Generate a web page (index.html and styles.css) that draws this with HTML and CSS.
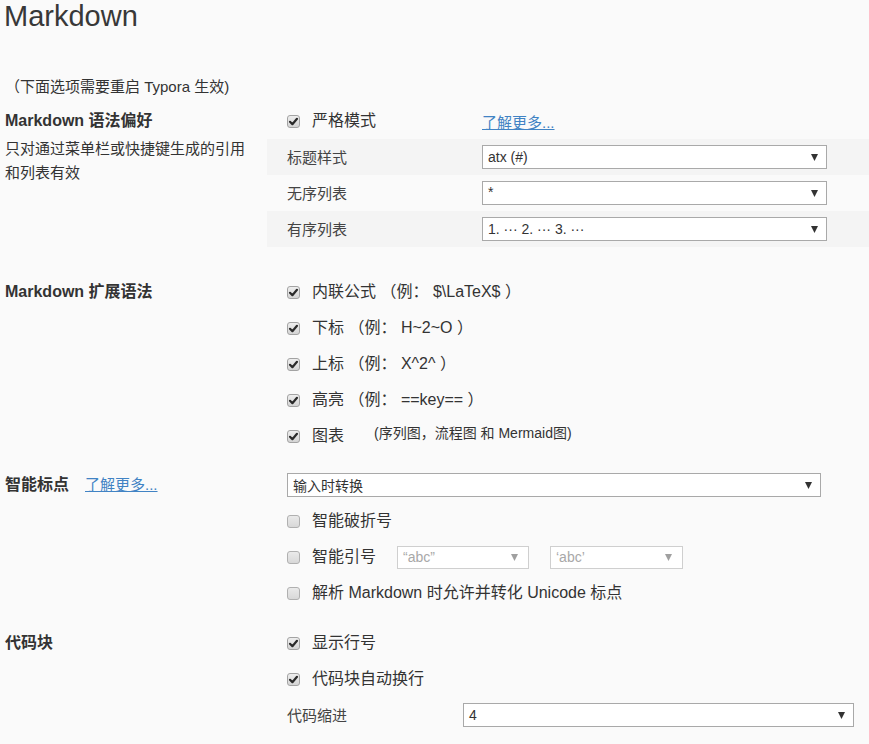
FILE: index.html
```html
<!DOCTYPE html>
<html lang="zh-CN">
<head>
<meta charset="utf-8">
<title>Markdown</title>
<link rel="stylesheet" href="styles.css">
</head>
<body>
<h1 class="title">Markdown</h1>
<p class="note">（下面选项需要重启 Typora 生效)</p>

<section class="group g1">
  <div class="side">
    <h2 class="head">Markdown 语法偏好</h2>
    <p class="desc">只对通过菜单栏或快捷键生成的引用<br>和列表有效</p>
  </div>
  <div class="main">
    <div class="row">
      <label class="check w195"><span class="box"><svg viewBox="0 0 13 13" width="13" height="13"><path d="M3 6.8 L5.4 9.2 L10 3.8" fill="none" stroke="#2b2b2b" stroke-width="2.2" stroke-linecap="round" stroke-linejoin="round"/></svg></span><span class="txt">严格模式</span></label>
      <a class="link" href="#">了解更多...</a>
    </div>
    <div class="row stripe">
      <span class="lbl w195">标题样式</span>
      <div class="select s345"><span>atx (#)</span><svg class="arr" viewBox="0 0 7 7" width="7" height="7"><path d="M0 0 H7 L3.5 7 Z" fill="#333"/></svg></div>
    </div>
    <div class="row">
      <span class="lbl w195">无序列表</span>
      <div class="select s345"><span class="star">*</span><svg class="arr" viewBox="0 0 7 7" width="7" height="7"><path d="M0 0 H7 L3.5 7 Z" fill="#333"/></svg></div>
    </div>
    <div class="row stripe">
      <span class="lbl w195">有序列表</span>
      <div class="select s345"><span>1. ··· 2. ··· 3. ···</span><svg class="arr" viewBox="0 0 7 7" width="7" height="7"><path d="M0 0 H7 L3.5 7 Z" fill="#333"/></svg></div>
    </div>
  </div>
</section>

<section class="group g2">
  <div class="side">
    <h2 class="head">Markdown 扩展语法</h2>
  </div>
  <div class="main">
    <div class="row"><label class="check"><span class="box"><svg viewBox="0 0 13 13" width="13" height="13"><path d="M3 6.8 L5.4 9.2 L10 3.8" fill="none" stroke="#2b2b2b" stroke-width="2.2" stroke-linecap="round" stroke-linejoin="round"/></svg></span><span class="txt">内联公式 （例： $\LaTeX$ ）</span></label></div>
    <div class="row"><label class="check"><span class="box"><svg viewBox="0 0 13 13" width="13" height="13"><path d="M3 6.8 L5.4 9.2 L10 3.8" fill="none" stroke="#2b2b2b" stroke-width="2.2" stroke-linecap="round" stroke-linejoin="round"/></svg></span><span class="txt">下标 （例： H~2~O ）</span></label></div>
    <div class="row"><label class="check"><span class="box"><svg viewBox="0 0 13 13" width="13" height="13"><path d="M3 6.8 L5.4 9.2 L10 3.8" fill="none" stroke="#2b2b2b" stroke-width="2.2" stroke-linecap="round" stroke-linejoin="round"/></svg></span><span class="txt">上标 （例： X^2^ ）</span></label></div>
    <div class="row"><label class="check"><span class="box"><svg viewBox="0 0 13 13" width="13" height="13"><path d="M3 6.8 L5.4 9.2 L10 3.8" fill="none" stroke="#2b2b2b" stroke-width="2.2" stroke-linecap="round" stroke-linejoin="round"/></svg></span><span class="txt">高亮 （例： ==key== ）</span></label></div>
    <div class="row"><label class="check"><span class="box"><svg viewBox="0 0 13 13" width="13" height="13"><path d="M3 6.8 L5.4 9.2 L10 3.8" fill="none" stroke="#2b2b2b" stroke-width="2.2" stroke-linecap="round" stroke-linejoin="round"/></svg></span><span class="txt">图表</span><span class="aside">(序列图，流程图 和 Mermaid图)</span></label></div>
  </div>
</section>

<section class="group g3">
  <div class="side">
    <h2 class="head">智能标点<a class="link hlink" href="#">了解更多...</a></h2>
  </div>
  <div class="main">
    <div class="row">
      <div class="select s534"><span class="cjk">输入时转换</span><svg class="arr" viewBox="0 0 7 7" width="7" height="7"><path d="M0 0 H7 L3.5 7 Z" fill="#333"/></svg></div>
    </div>
    <div class="row"><label class="check"><span class="box off"></span><span class="txt">智能破折号</span></label></div>
    <div class="row">
      <label class="check w110"><span class="box off"></span><span class="txt">智能引号</span></label>
      <div class="select small dis"><span>“abc”</span><svg class="arr" viewBox="0 0 7 7" width="7" height="7"><path d="M0 0 H7 L3.5 7 Z" fill="#a0a0a0"/></svg></div>
      <div class="select small dis gap"><span>‘abc’</span><svg class="arr" viewBox="0 0 7 7" width="7" height="7"><path d="M0 0 H7 L3.5 7 Z" fill="#a0a0a0"/></svg></div>
    </div>
    <div class="row"><label class="check"><span class="box off"></span><span class="txt">解析 Markdown 时允许并转化 Unicode 标点</span></label></div>
  </div>
</section>

<section class="group g4">
  <div class="side">
    <h2 class="head">代码块</h2>
  </div>
  <div class="main">
    <div class="row"><label class="check"><span class="box"><svg viewBox="0 0 13 13" width="13" height="13"><path d="M3 6.8 L5.4 9.2 L10 3.8" fill="none" stroke="#2b2b2b" stroke-width="2.2" stroke-linecap="round" stroke-linejoin="round"/></svg></span><span class="txt">显示行号</span></label></div>
    <div class="row"><label class="check"><span class="box"><svg viewBox="0 0 13 13" width="13" height="13"><path d="M3 6.8 L5.4 9.2 L10 3.8" fill="none" stroke="#2b2b2b" stroke-width="2.2" stroke-linecap="round" stroke-linejoin="round"/></svg></span><span class="txt">代码块自动换行</span></label></div>
    <div class="row">
      <span class="lbl w176">代码缩进</span>
      <div class="select s391"><span>4</span><svg class="arr" viewBox="0 0 7 7" width="7" height="7"><path d="M0 0 H7 L3.5 7 Z" fill="#333"/></svg></div>
    </div>
  </div>
</section>
</body>
</html>
```

FILE: styles.css
```css
* { box-sizing: border-box; }

html, body {
  margin: 0;
  padding: 0;
  background: #fafafa;
}

body {
  width: 869px;
  height: 744px;
  overflow: hidden;
  color: #333;
  font-family: "Liberation Sans", "Noto Sans CJK SC", sans-serif;
  font-size: 16px;
}

.title {
  margin: 0;
  padding-left: 4px;
  font-size: 29px;
  font-weight: normal;
  line-height: 32px;
  color: #383838;
}

.note {
  margin: 43px 0 0 0;
  padding-left: 5px;
  font-size: 15px;
  line-height: 24px;
  height: 24px;
  color: #333;
}

.group {
  display: flex;
  align-items: flex-start;
}

.g1 { margin-top: 4px; }
.g2 { margin-top: 27px; }
.g3 { margin-top: 13px; }
.g4 { margin-top: 14px; }

.side {
  width: 267px;
  flex: none;
  padding-left: 5px;
}

.head {
  margin: 0;
  padding-top: 6px;
  font-size: 16px;
  line-height: 24px;
  font-weight: bold;
  color: #333;
  display: flex;
  align-items: center;
}

.desc {
  margin: 4px 0 0 0;
  font-size: 15px;
  line-height: 24px;
  color: #333;
}

.main {
  flex: 1;
  display: flex;
  flex-direction: column;
}

.row {
  height: 36px;
  display: flex;
  align-items: center;
  padding-left: 20px;
}

.stripe {
  background: #f4f4f4;
}

.check {
  display: flex;
  align-items: center;
  font-size: 16px;
  color: #333;
}

.w195 { width: 195px; flex: none; }
.w176 { width: 176px; flex: none; }
.w110 { width: 110px; flex: none; }

.box {
  width: 13px;
  height: 13px;
  flex: none;
  border: 1px solid #a3a3a3;
  border-radius: 3px;
  background: linear-gradient(#eeeeee, #d4d4d4);
  margin-right: 12px;
  position: relative;
}

.box svg {
  position: absolute;
  left: -1px;
  top: -1px;
}

.box.off {
  background: linear-gradient(#eaeaea, #d8d8d8);
  border-color: #b0b0b0;
}

.txt {
  line-height: 24px;
}

.aside {
  margin-left: 30px;
  font-size: 14px;
  line-height: 24px;
  position: relative;
  top: -3px;
}

.link {
  color: #4183c4;
  text-decoration: underline;
  font-size: 15px;
  font-weight: normal;
}

.hlink {
  margin-left: 16px;
}

.lbl {
  font-size: 15px;
  color: #444;
  position: relative;
  top: -1px;
}

.select {
  height: 24px;
  background: #fff;
  border: 1px solid #a9a9a9;
  display: flex;
  align-items: center;
  justify-content: space-between;
  padding: 0 8px 0 5px;
  font-size: 14px;
  color: #333;
  flex: none;
}

.select .arr {
  flex: none;
}

.select .star {
  align-self: flex-start;
  margin-top: 2px;
}

.s345 { width: 345px; }
.s534 { width: 534px; }
.s391 { width: 391px; }

.small {
  width: 132px;
  height: 23px;
  border-color: #cfcfcf;
  color: #a8a8a8;
  padding-right: 10px;
}

.small.gap {
  margin-left: 21px;
  width: 133px;
}
```
